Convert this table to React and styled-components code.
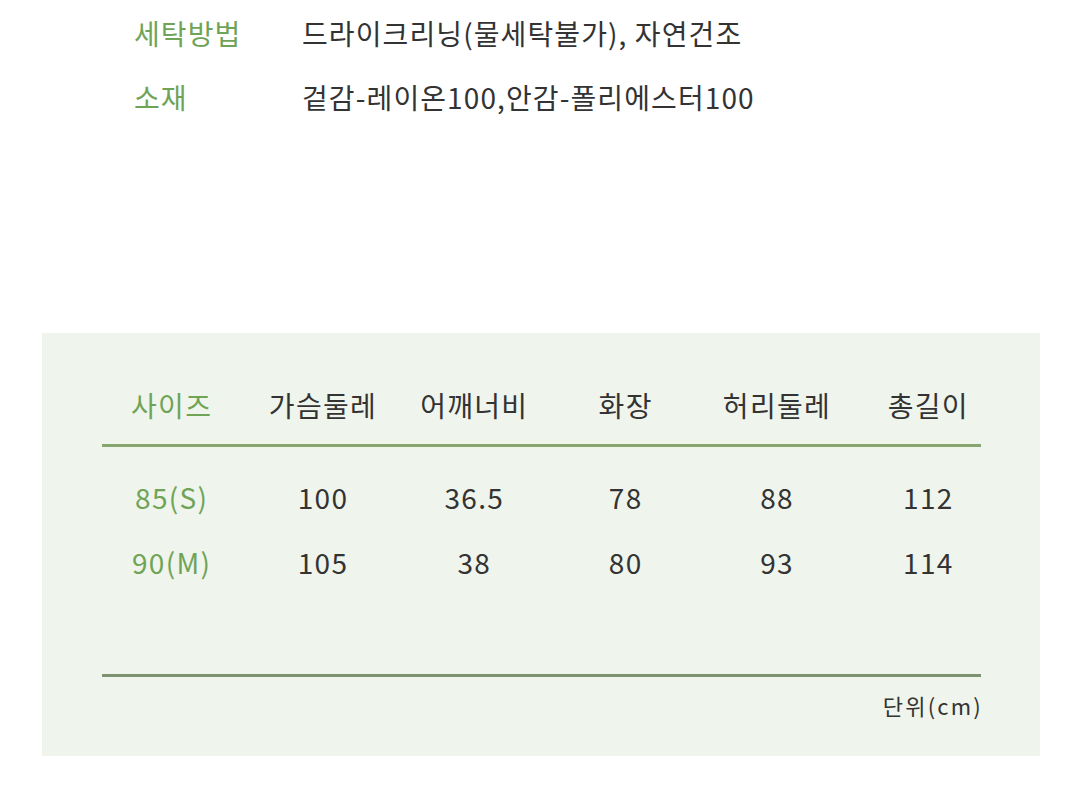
import React from 'react'
import styled, { createGlobalStyle } from 'styled-components'

const Global = createGlobalStyle`
  html, body { margin: 0; padding: 0; background: #fff; }
  body {
    font-family: "Noto Sans CJK KR", "Noto Sans", sans-serif;
    color: #333;
  }
`

const info = [
  { label: '세탁방법', value: '드라이크리닝(물세탁불가), 자연건조' },
  { label: '소재', value: '겉감-레이온100,안감-폴리에스터100' },
]

const heads = ['사이즈', '가슴둘레', '어깨너비', '화장', '허리둘레', '총길이']
const rows = [
  ['85(S)', '100', '36.5', '78', '88', '112'],
  ['90(M)', '105', '38', '80', '93', '114'],
]

const App = () => {
  return (
    <>
      <Global />
      <Page>
        <InfoList>
          {info.map((r) => (
            <InfoRow key={r.label}>
              <Label>{r.label}</Label>
              <Value>{r.value}</Value>
            </InfoRow>
          ))}
        </InfoList>

        <Panel>
          <Table>
            <Head>
              <Grid>
                {heads.map((h, i) => (
                  <Cell key={h} $green={i === 0}>{h}</Cell>
                ))}
              </Grid>
            </Head>
            <Body>
              {rows.map((r) => (
                <Grid key={r[0]}>
                  {r.map((c, i) => (
                    <Cell key={i} $green={i === 0}>{c}</Cell>
                  ))}
                </Grid>
              ))}
            </Body>
            <Unit>단위(cm)</Unit>
          </Table>
        </Panel>
      </Page>
    </>
  )
}

const Page = styled.div`
  width: 1080px;
  height: 798px;
  overflow: hidden;
  background: #fff;
`

const InfoList = styled.div`
  padding: 13px 0 0 134px;
  display: flex;
  flex-direction: column;
  gap: 24px;
`

const InfoRow = styled.div`
  display: flex;
  align-items: center;
  height: 40px;
  font-size: 28px;
  letter-spacing: 1.1px;
`

const Label = styled.span`
  width: 168px;
  color: #6fa457;
`

const Value = styled.span`
  color: #333;
`

const Panel = styled.div`
  margin: 216px 0 0 42px;
  width: 998px;
  height: 423px;
  background: #eff4ec;
  padding: 52px 0 0 60px;
  box-sizing: border-box;
`

const Table = styled.div`
  width: 879px;
  display: flex;
  flex-direction: column;
`

const Head = styled.div`
  padding-bottom: 19px;
  border-bottom: 3px solid #86a56f;
`

const Grid = styled.div`
  display: grid;
  grid-template-columns: repeat(6, 1fr);
  margin: 0 -23px 0 -6px;
  height: 40px;
  align-items: center;
`

const Body = styled.div`
  padding: 30px 0 0;
  height: 230px;
  box-sizing: border-box;
  border-bottom: 3px solid #7d9370;
  display: flex;
  flex-direction: column;
  gap: 25px;
`

const Cell = styled.div`
  text-align: center;
  font-size: 28px;
  letter-spacing: 1.3px;
  color: ${(p) => (p.$green ? '#6fa457' : '#333')};
`

const Unit = styled.div`
  align-self: flex-end;
  margin: 16px -2px 0 0;
  line-height: 24px;
  font-size: 22px;
  letter-spacing: 2.2px;
  color: #333;
`

export default App
